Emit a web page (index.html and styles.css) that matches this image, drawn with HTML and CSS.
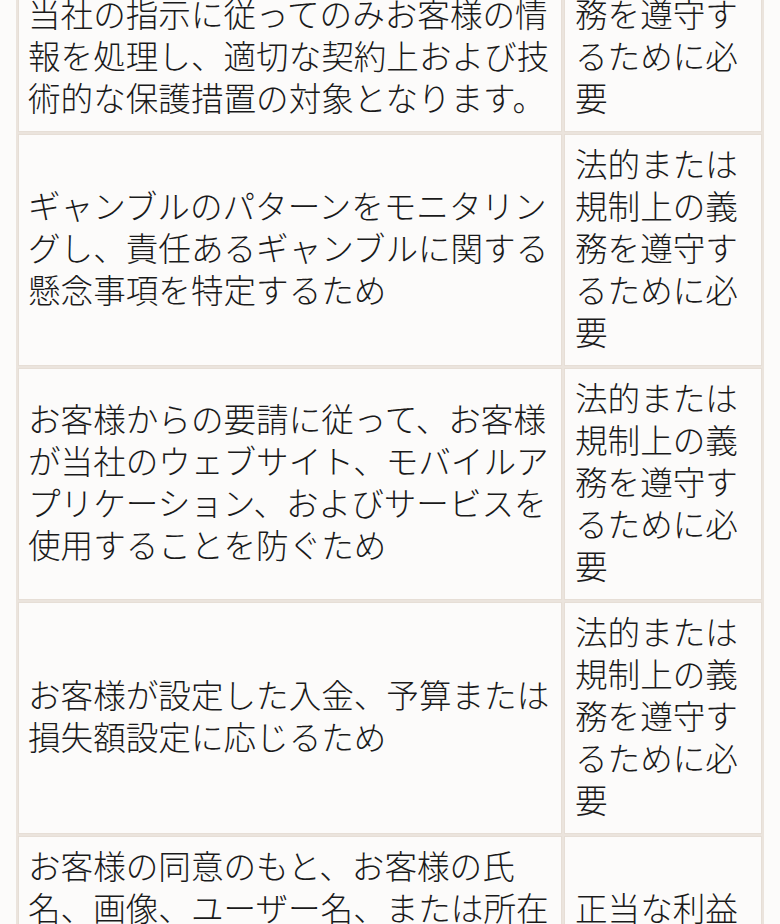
FILE: index.html
```html
<!DOCTYPE html>
<html lang="ja">
<head>
<meta charset="utf-8">
<title>処理目的</title>
<link rel="stylesheet" href="styles.css">
</head>
<body>
<div class="wrap">
  <table class="basis">
    <tbody>
      <tr>
        <td class="purpose">お客様の情報を第三者と共有する場合、それらの第三者サービス業者は当社の指示に従ってのみお客様の情報を処理し、適切な契約上および技術的な保護措置の対象となります。</td>
        <td class="legal">法的または規制上の義務を遵守するために必要</td>
      </tr>
      <tr>
        <td class="purpose">ギャンブルのパターンをモニタリングし、責任あるギャンブルに関する懸念事項を特定するため</td>
        <td class="legal">法的または規制上の義務を遵守するために必要</td>
      </tr>
      <tr>
        <td class="purpose">お客様からの要請に従って、お客様が当社のウェブサイト、モバイルアプリケーション、およびサービスを使用することを防ぐため</td>
        <td class="legal">法的または規制上の義務を遵守するために必要</td>
      </tr>
      <tr>
        <td class="purpose">お客様が設定した入金、予算または損失額設定に応じるため</td>
        <td class="legal">法的または規制上の義務を遵守するために必要</td>
      </tr>
      <tr>
        <td class="purpose">お客様の同意のもと、お客様の氏名、画像、ユーザー名、または所在地を他のユーザーに表示するため</td>
        <td class="legal">正当な利益</td>
      </tr>
    </tbody>
  </table>
</div>
</body>
</html>
```
FILE: styles.css
```css
html, body {
  margin: 0;
  padding: 0;
  background: #fcfbfa;
}

body {
  font-family: "Noto Sans CJK JP", "Noto Sans", sans-serif;
  font-weight: 300;
  font-size: 32.6px;
  line-height: 42px;
  color: #1a1a1a;
}

.wrap {
  padding: 0 16px;
}

.basis {
  margin-top: -102px;
  width: 748px;
  border-collapse: separate;
  border-spacing: 2px;
  background: #ebe4dd;
  table-layout: fixed;
}

.basis td {
  background: #fcfbfa;
  border: 1px solid #e6ded6;
  padding: 7px 10px 13px;
  vertical-align: middle;
}

.basis td.purpose {
  width: 522px;
  padding-left: 9px;
  padding-right: 11px;
}

.basis td.legal {
  width: 176px;
}
```
